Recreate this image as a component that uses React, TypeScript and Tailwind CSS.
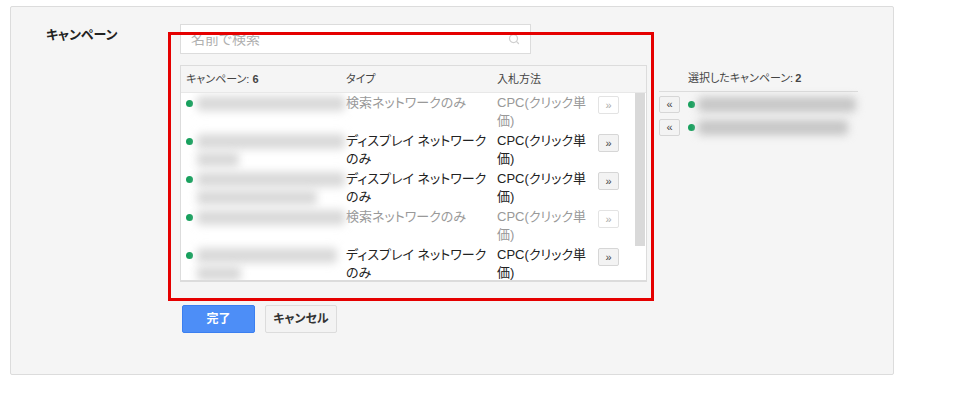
import { Search } from "lucide-react";

const font = "font-['Liberation_Sans','Noto_Sans_CJK_JP',sans-serif] [font-feature-settings:'palt']";

type Row = {
  lines: number[];
  type: [string, string?];
  muted: boolean;
};

const rows: Row[] = [
  { lines: [148], type: ["検索ネットワークのみ"], muted: true },
  { lines: [148, 42], type: ["ディスプレイ ネットワーク", "のみ"], muted: false },
  { lines: [148, 120], type: ["ディスプレイ ネットワーク", "のみ"], muted: false },
  { lines: [148], type: ["検索ネットワークのみ"], muted: true },
  { lines: [140, 44], type: ["ディスプレイ ネットワーク", "のみ"], muted: false },
];

// blurred campaign name placeholder
const Blur = ({ lines, dark }: { lines: number[]; dark?: boolean }) => (
  <div className="flex flex-col gap-[3px] pt-[2px]">
    {lines.map((w, i) => (
      <div
        key={i}
        style={{ width: w }}
        className={`h-[15px] rounded-[4px] blur-[4px] ${dark ? "bg-[#c6c6c6]" : "bg-[#d9d9d9]"}`}
      />
    ))}
  </div>
);

const Dot = () => <span className="block h-[7px] w-[7px] rounded-full bg-[#17a05d]" />;

export default function App() {
  return (
    <div className={`relative h-[395px] w-[963px] bg-white pl-[10px] pt-[6px] text-[#333] ${font}`}>
      <div className="flex h-[369px] w-[884px] rounded-[2px] border border-[#dcdcdc] bg-[#f5f5f5] pl-[35px] pt-[17px]">
        <div className="w-[134px] pt-[2px] text-[13px] font-bold leading-[18px] text-[#222]">キャンペーン</div>

        <div className="flex flex-col">
          <div className="flex h-[30px] w-[351px] items-center justify-between border border-[#dcdcdc] bg-white pl-[10px] pr-[10px]">
            <span className="text-[14px] text-[#b0b0b0]">名前で検索</span>
            <Search size={12} strokeWidth={2.5} className="text-[#d0d0d0]" />
          </div>

          <div className="mt-[11px] flex gap-[12px]">
            {/* available campaigns */}
            <div className="w-[467px] border border-[#dcdcdc] bg-[#f5f5f5]">
              <div className="flex h-[27px] items-center border-b border-[#e8e8e8] pl-[5px] text-[11px] text-[#444]">
                <div className="w-[160px]">
                  キャンペーン: <b>6</b>
                </div>
                <div className="w-[151px]">タイプ</div>
                <div>入札方法</div>
              </div>
              <div className="flex h-[188px] overflow-hidden border-b border-[#dcdcdc] bg-white">
                <div className="flex-1">
                  {rows.map((r, i) => (
                    <div key={i} className="flex h-[38px] items-start pl-[5px] pt-[1px] text-[13px] leading-[18px]">
                      <div className="w-[11px] pt-[6px]">
                        <Dot />
                      </div>
                      <div className="w-[149px]">
                        <Blur lines={r.lines} />
                      </div>
                      <div className={`w-[151px] whitespace-nowrap ${r.muted ? "text-[#999]" : "text-[#222]"}`}>
                        <div>{r.type[0]}</div>
                        {r.type[1] && <div>{r.type[1]}</div>}
                      </div>
                      <div className={`w-[101px] whitespace-nowrap ${r.muted ? "text-[#999]" : "text-[#222]"}`}>
                        <div>CPC(クリック単</div>
                        <div>価)</div>
                      </div>
                      <button
                        className={`mt-[2px] flex h-[18px] w-[21px] items-center justify-center rounded-[2px] border text-[11px] leading-none ${
                          r.muted ? "border-[#e3e3e3] bg-white text-[#aaa]" : "border-[#d6d6d6] bg-[#f3f3f3] text-[#444]"
                        }`}
                      >
                        »
                      </button>
                    </div>
                  ))}
                </div>
                <div className="w-[11px] pr-[1px]">
                  <div className="h-[153px] w-[10px] bg-[#d9d9d9]" />
                </div>
              </div>
            </div>

            {/* selected campaigns */}
            <div className="w-[199px]">
              <div className="flex h-[27px] items-center border-b border-[#dcdcdc] pl-[29px] text-[11px] text-[#444]">
                選択したキャンペーン: <b className="ml-[2px]">2</b>
              </div>
              <div className="flex flex-col gap-[6px] pt-[4px]">
                {[158, 150].map((w, i) => (
                  <div key={i} className="flex items-center">
                    <button className="flex h-[17px] w-[21px] items-center justify-center rounded-[2px] border border-[#d6d6d6] bg-[#f3f3f3] text-[11px] leading-none text-[#444]">
                      «
                    </button>
                    <div className="ml-[8px] mr-[3px]">
                      <Dot />
                    </div>
                    <div className="-mt-[2px]">
                      <Blur lines={[w]} dark />
                    </div>
                  </div>
                ))}
              </div>
            </div>
          </div>

          <div className="ml-[2px] mt-[23px] flex gap-[10px]">
            <button className="h-[28px] w-[73px] rounded-[2px] border border-[#3b7ff0] bg-[#4d8ef7] text-[12px] font-bold text-white">
              完了
            </button>
            <button className="h-[28px] w-[72px] rounded-[2px] border border-[#dcdcdc] bg-[#f3f3f3] text-[12px] font-bold text-[#333]">
              キャンセル
            </button>
          </div>
        </div>
      </div>

      {/* annotation box */}
      <div className="pointer-events-none absolute left-[168px] top-[32px] h-[269px] w-[486px] border-[3px] border-[#e50000]" />
    </div>
  );
}
